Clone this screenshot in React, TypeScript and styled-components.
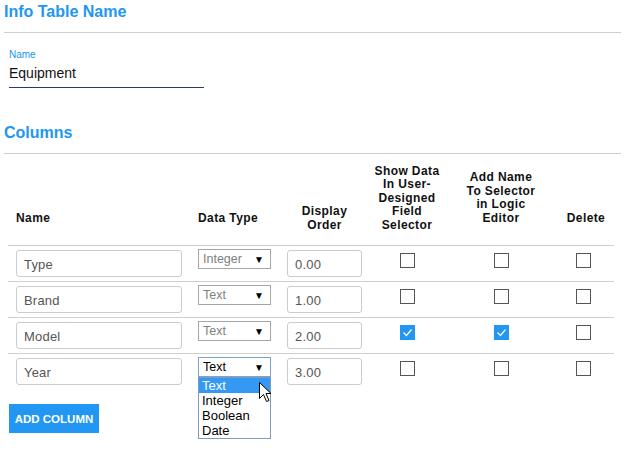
import React from "react";
import styled, { createGlobalStyle } from "styled-components";

type Column = { name: string; type: string; order: string; show: boolean; add: boolean; del: boolean };

const columns: Column[] = [
  { name: "Type", type: "Integer", order: "0.00", show: false, add: false, del: false },
  { name: "Brand", type: "Text", order: "1.00", show: false, add: false, del: false },
  { name: "Model", type: "Text", order: "2.00", show: true, add: true, del: false },
  { name: "Year", type: "Text", order: "3.00", show: false, add: false, del: false },
];

const options = ["Text", "Integer", "Boolean", "Date"];

function Checkbox({ checked }: { checked: boolean }) {
  return (
    <Box $checked={checked}>
      {checked && (
        <svg width="13" height="13" viewBox="0 0 13 13">
          <path d="M2.5 6.5 L5.5 9.5 L10.5 3.5" fill="none" stroke="#fff" strokeWidth="1.2" />
        </svg>
      )}
    </Box>
  );
}

function Pointer() {
  return (
    <Cursor width="13" height="21" viewBox="0 0 13 21">
      <path
        d="M0.5 0.5 L0.5 16.5 L4.5 12.5 L7.5 19.5 L10 18.5 L7 11.5 L12 11.5 Z"
        fill="#fff"
        stroke="#000"
        strokeWidth="1"
      />
    </Cursor>
  );
}

function App() {
  return (
    <Page>
      <GlobalStyle />
      <SectionTitle>Info Table Name</SectionTitle>
      <Field>
        <Label>Name</Label>
        <LineInput>Equipment</LineInput>
      </Field>

      <SectionTitle $top={33}>Columns</SectionTitle>
      <Table>
        <HeadRow>
          <Th $pb={20}>Name</Th>
          <Th $pb={20}>Data Type</Th>
          <Th $pb={13} $center>Display<br />Order</Th>
          <Th $pb={13} $center>Show Data<br />In User-<br />Designed<br />Field<br />Selector</Th>
          <Th $pb={20} $center>Add Name<br />To Selector<br />in Logic<br />Editor</Th>
          <Th $pb={20} $center>Delete</Th>
        </HeadRow>
        {columns.map((c, i) => {
          const open = i === columns.length - 1;
          return (
            <Row key={c.name}>
              <Cell>
                <TextInput $width={166}>{c.name}</TextInput>
              </Cell>
              <Cell>
                <SelectWrap>
                  <SelectBox $focused={open}>
                    <span>{c.type}</span>
                    <Arrow>▼</Arrow>
                  </SelectBox>
                  {open && (
                    <OptionList>
                      {options.map((o) => (
                        <OptionItem key={o} $active={o === c.type}>{o}</OptionItem>
                      ))}
                      <Pointer />
                    </OptionList>
                  )}
                </SelectWrap>
              </Cell>
              <Cell>
                <TextInput $width={75}>{c.order}</TextInput>
              </Cell>
              <CheckCell>
                <Checkbox checked={c.show} />
              </CheckCell>
              <CheckCell>
                <Checkbox checked={c.add} />
              </CheckCell>
              <CheckCell $shift={-5}>
                <Checkbox checked={c.del} />
              </CheckCell>
            </Row>
          );
        })}
      </Table>
      <AddButton>ADD COLUMN</AddButton>
    </Page>
  );
}

export default App;

const GlobalStyle = createGlobalStyle`
  body {
    margin: 0;
    background: #fff;
    font-family: "Liberation Sans", Arial, sans-serif;
  }
`;

const Page = styled.div`
  width: 617px;
  min-height: 450px;
  padding: 0 5px 0 4px;
`;

const SectionTitle = styled.h2<{ $top?: number }>`
  margin: ${(p) => p.$top ?? 0}px 0 0;
  padding: 2px 0 10px;
  font-size: 16px;
  line-height: 20px;
  font-weight: bold;
  color: #2196f3;
  border-bottom: 1px solid #cfcfcf;
`;

const Field = styled.div`
  display: flex;
  flex-direction: column;
  width: 195px;
  margin: 16px 0 0 5px;
`;

const Label = styled.div`
  font-size: 10px;
  line-height: 12px;
  color: #2196f3;
`;

const LineInput = styled.div`
  margin-top: 3px;
  padding-bottom: 5px;
  font-size: 14px;
  line-height: 18px;
  color: #111;
  border-bottom: 1px solid #2a3a70;
`;

const Table = styled.div`
  width: 606px;
  margin-left: 4px;
`;

const grid = `
  display: grid;
  grid-template-columns: 182px 89px 91px 74px 114px 56px;
`;

const HeadRow = styled.div`
  ${grid}
  height: 91px;
  align-items: end;
`;

const Th = styled.div<{ $pb: number; $center?: boolean }>`
  padding: 0 ${(p) => (p.$center ? 0 : 8)}px ${(p) => p.$pb}px;
  font-size: 12px;
  line-height: 13.4px;
  letter-spacing: 0.4px;
  font-weight: bold;
  color: #111;
  white-space: nowrap;
  text-align: ${(p) => (p.$center ? "center" : "left")};
`;

const Row = styled.div`
  ${grid}
  height: 35px;
  border-top: 1px solid #cfcfcf;
  align-items: start;
`;

const Cell = styled.div`
  padding: 4px 8px 0;
`;

const CheckCell = styled.div<{ $shift?: number }>`
  display: flex;
  justify-content: center;
  padding-top: 7px;
  margin-left: ${(p) => p.$shift ?? 0}px;
`;

const TextInput = styled.div<{ $width: number }>`
  box-sizing: border-box;
  width: ${(p) => p.$width}px;
  height: 27px;
  padding: 0 7px;
  border: 1px solid #cccccc;
  border-radius: 3px;
  font-size: 13px;
  line-height: 27px;
  color: #555;
  letter-spacing: 0.2px;
`;

const SelectWrap = styled.div`
  position: relative;
  width: 73px;
  margin-top: -1px;
`;

const SelectBox = styled.div<{ $focused: boolean }>`
  box-sizing: border-box;
  display: flex;
  align-items: center;
  justify-content: space-between;
  height: 20px;
  padding: 0 6px 0 4px;
  border: 1px solid ${(p) => (p.$focused ? "#7da2ce" : "#a6a6a6")};
  font-size: 12.5px;
  color: ${(p) => (p.$focused ? "#000" : "#808080")};
  background: #fff;
`;

const Arrow = styled.span`
  font-size: 10px;
  color: #000;
`;

const OptionList = styled.div`
  position: absolute;
  top: 20px;
  left: 0;
  width: 73px;
  box-sizing: border-box;
  border: 1px solid #7f9db9;
  background: #fff;
  z-index: 2;
`;

const OptionItem = styled.div<{ $active: boolean }>`
  height: 15px;
  padding-left: 3px;
  font-size: 13px;
  line-height: 15px;
  color: ${(p) => (p.$active ? "#fff" : "#000")};
  background: ${(p) => (p.$active ? "#3399f3" : "transparent")};
`;

const Cursor = styled.svg`
  position: absolute;
  top: 4px;
  left: 60px;
`;

const Box = styled.span<{ $checked: boolean }>`
  box-sizing: border-box;
  display: flex;
  align-items: center;
  justify-content: center;
  width: 15px;
  height: 15px;
  border: ${(p) => (p.$checked ? "none" : "1px solid #555")};
  background: ${(p) => (p.$checked ? "#2196f3" : "#fff")};
`;

const AddButton = styled.button`
  display: block;
  margin: 15px 0 0 5px;
  width: 90px;
  height: 29px;
  padding: 0;
  border: none;
  border-radius: 0;
  background: #2196f3;
  color: #fff;
  font-family: "Liberation Sans", Arial, sans-serif;
  font-size: 11.5px;
  font-weight: bold;
`;
